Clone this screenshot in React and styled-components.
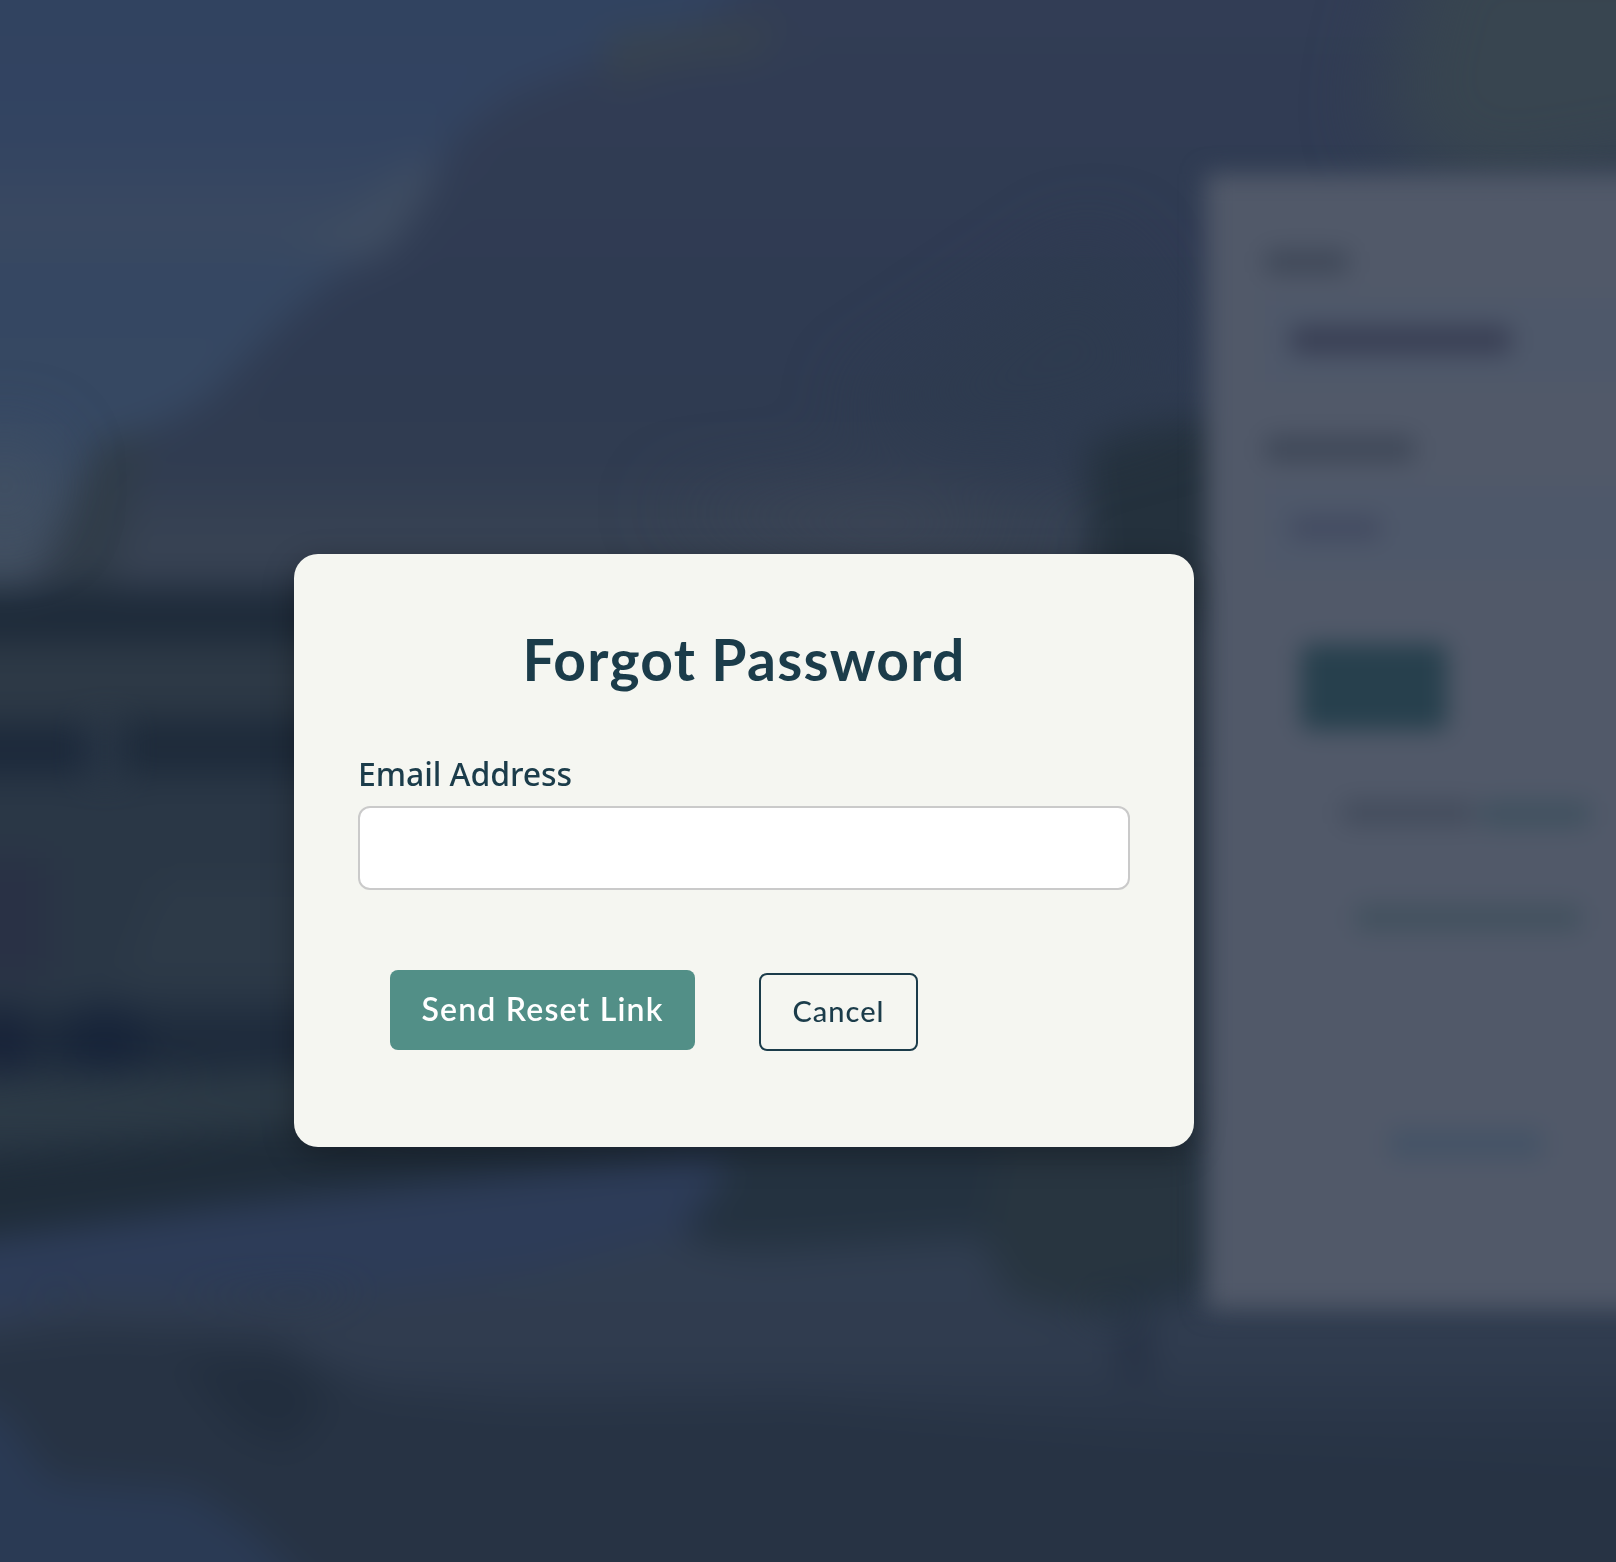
import React from "react";
import styled, { createGlobalStyle } from "styled-components";

const GlobalStyle = createGlobalStyle`
  *, *::before, *::after { box-sizing: border-box; }
  body { margin: 0; background: #29364a; }
`;

const Page = styled.main`
  position: relative;
  width: 100%;
  height: 1562px;
  overflow: hidden;
  background: #2b384a;
`;

const Landscape = styled.svg`
  position: absolute;
  inset: 0;
  width: 1616px;
  height: 1562px;
`;

const LoginLayer = styled.div`
  position: absolute;
  inset: 0;
  display: flex;
  justify-content: flex-end;
  align-items: flex-start;
  padding-top: 174px;
  filter: blur(12px);
`;

const LoginCard = styled.div`
  display: flex;
  flex-direction: column;
  flex-shrink: 0;
  width: 470px;
  height: 1136px;
  margin-right: -60px;
  padding: 76px 0 0 59px;
  background: #515969;
`;

const Smudge = styled.div`
  width: ${(p) => p.$width}px;
  height: ${(p) => p.$height}px;
  border-radius: 6px;
  background: ${(p) => p.$tone};
`;

const LoginField = styled.div`
  display: flex;
  align-items: center;
  height: 84px;
  margin: 24px 0 ${(p) => p.$after}px;
  padding-left: 26px;
  background: #4e586a;
`;

const LoginButton = styled.div`
  width: 146px;
  height: 86px;
  margin: -1px 0 -1px 36px;
  border-radius: 8px;
  background: #27404d;
`;

const LoginLine = styled.div`
  display: flex;
  gap: 6px;
  margin: ${(p) => p.$before}px 0 0 ${(p) => p.$indent}px;
`;

const Overlay = styled.div`
  position: absolute;
  inset: 0;
  display: flex;
  align-items: center;
  justify-content: center;
  padding: 139px 128px 0 0;
`;

const Dialog = styled.form`
  width: 900px;
  height: 593px;
  padding: 64px;
  border-radius: 24px;
  background: #f5f6f1;
  box-shadow: 0 8px 32px rgba(0, 0, 0, 0.3);
  color: #1b3c4a;
`;

const Title = styled.h2`
  margin: 7px 0 0;
  font: 700 57px/68px Lato, "Open Sans", sans-serif;
  letter-spacing: 1.25px;
  text-align: center;
  white-space: nowrap;
`;

const Label = styled.label`
  display: block;
  margin-top: 59px;
  font: 500 32px/44px "Noto Sans", "Open Sans", sans-serif;
  letter-spacing: -0.08px;
`;

const TextInput = styled.input`
  display: block;
  width: 100%;
  height: 84px;
  margin-top: 10px;
  padding: 0 24px;
  border: 2px solid #cacaca;
  border-radius: 12px;
  background: #fff;
  font: 32px "Noto Sans", sans-serif;
  outline: none;
`;

const Actions = styled.div`
  display: flex;
  align-items: flex-end;
  gap: 64px;
  margin-top: 80px;
  padding-left: 32px;
`;

const Button = styled.button`
  flex-shrink: 0;
  width: ${(p) => (p.$primary ? 305 : 159)}px;
  height: ${(p) => (p.$primary ? 80 : 78)}px;
  margin-bottom: ${(p) => (p.$primary ? 1 : 0)}px;
  padding: 0 0 3px;
  border: ${(p) => (p.$primary ? "none" : "2px solid #1b3c4a")};
  border-radius: 8px;
  background: ${(p) => (p.$primary ? "#528f87" : "transparent")};
  color: ${(p) => (p.$primary ? "#fff" : "#1b3c4a")};
  font: ${(p) => (p.$primary ? "600 32px" : "500 29px")} Lato, "Open Sans", sans-serif;
  letter-spacing: ${(p) => (p.$primary ? 1.2 : 1)}px;
  white-space: nowrap;
`;

function MountainScene() {
  return (
    <Landscape viewBox="0 0 1616 1562" aria-hidden="true">
      <defs>
        <filter id="soft" filterUnits="userSpaceOnUse" x="-150" y="-150" width="1916" height="1862" colorInterpolationFilters="sRGB">
          <feGaussianBlur stdDeviation="18" />
        </filter>
        <filter id="mist" filterUnits="userSpaceOnUse" x="-150" y="-150" width="1916" height="1862" colorInterpolationFilters="sRGB">
          <feGaussianBlur stdDeviation="38" />
        </filter>
        <linearGradient id="sky" x1="0" y1="0" x2="0" y2="1">
          <stop offset="0" stopColor="#304260" />
          <stop offset="0.35" stopColor="#334461" />
          <stop offset="0.47" stopColor="#3a4961" />
          <stop offset="0.55" stopColor="#354762" />
          <stop offset="0.8" stopColor="#374963" />
          <stop offset="1" stopColor="#435060" />
        </linearGradient>
        <linearGradient id="rock" gradientUnits="userSpaceOnUse" x1="0" y1="0" x2="0" y2="600">
          <stop offset="0" stopColor="#323d55" />
          <stop offset="0.55" stopColor="#2f3b52" />
          <stop offset="0.78" stopColor="#303c51" />
          <stop offset="0.88" stopColor="#374253" />
          <stop offset="1" stopColor="#384253" />
        </linearGradient>
        <linearGradient id="ground" gradientUnits="userSpaceOnUse" x1="0" y1="1200" x2="0" y2="1562">
          <stop offset="0" stopColor="#313e51" />
          <stop offset="0.42" stopColor="#303c4f" />
          <stop offset="0.62" stopColor="#293547" />
          <stop offset="1" stopColor="#253243" />
        </linearGradient>
      </defs>
      <rect x="0" y="0" width="1616" height="1562" fill="#2b3848" />
      <g filter="url(#soft)">
        <rect x="-100" y="-100" width="1000" height="690" fill="url(#sky)" />
        <path d="M340 225L430 150V205L390 260L290 245Z" fill="#3f4d62" />
        <path d="M850 -100L710 15L580 68L510 95L455 138L427 195L390 250L340 272L285 320L205 400L110 450L75 500L38 560L20 620H1750V-100Z" fill="url(#rock)" />
        <path d="M605 35L780 22L760 55L650 65L615 90Z" fill="#38434f" />
        <path d="M100 440L150 430L130 510L110 590H50L70 500Z" fill="#303c49" />
        <rect x="-80" y="588" width="1200" height="54" fill="#1d2a39" />
        <rect x="-80" y="642" width="1300" height="82" fill="#2d3946" />
        <rect x="-80" y="724" width="170" height="50" fill="#1b283a" />
        <rect x="120" y="718" width="400" height="56" fill="#1d2a3a" />
        <rect x="-80" y="774" width="700" height="240" fill="#2a3746" />
        <rect x="-80" y="858" width="130" height="120" fill="#293145" />
        <path d="M160 880H500V980H120Z" fill="#2d3a48" />
        <rect x="-80" y="1010" width="420" height="64" fill="#1e2b3c" />
        <ellipse cx="105" cy="1038" rx="42" ry="34" fill="#172439" />
        <ellipse cx="0" cy="1040" rx="30" ry="36" fill="#182339" />
        <path d="M-80 1088L420 1065V1120L-80 1145Z" fill="#2c3a46" />
        <path d="M-80 1160L300 1125H1200V1280H-80Z" fill="#1f2c39" />
        <path d="M-80 1248L220 1206L735 1150L725 1180L680 1240L560 1275L450 1290L60 1295L-80 1345Z" fill="#2d3c58" />
        <path d="M735 1130H1210V1310H1000L970 1250L760 1250L705 1225Z" fill="#243240" />
        <path d="M-80 1330L100 1290L300 1300L540 1270L680 1235L760 1250L980 1236L1010 1295L1110 1320L1200 1290L1700 1290V1660H-80Z" fill="url(#ground)" />
        <path d="M-80 1345L100 1325L270 1335L380 1390L520 1405L800 1400L1120 1435L1680 1470V1680H-80Z" fill="#273344" />
        <path d="M180 1360L290 1355L330 1400L290 1450L240 1430Z" fill="#222e3e" />
        <path d="M-80 1395L0 1410L50 1480L190 1490L250 1530L320 1600H-80Z" fill="#2a3a54" />
        <path d="M1000 1140H1195V1270L1110 1285L1100 1310L1015 1300L985 1230Z" fill="#283540" />
        <path d="M1085 440L1130 420H1250V620H1095Z" fill="#24313d" />
        <ellipse cx="1135" cy="1352" rx="12" ry="32" fill="#222d40" />
      </g>
      <g filter="url(#mist)">
        <path d="M1430 -80H1720V160L1470 200L1380 120Z" fill="#384550" />
        <ellipse cx="5" cy="485" rx="42" ry="45" fill="#4c5866" opacity="0.6" />
        <path d="M850 410L1100 240L1190 400L1000 450Z" fill="#2e3b4f" />
        <path d="M650 505L900 480L1040 530L880 570Z" fill="#3f4857" opacity="0.5" />
      </g>
    </Landscape>
  );
}

export default function App() {
  return (
    <>
      <GlobalStyle />
      <Page>
        <MountainScene />
        <LoginLayer aria-hidden="true">
          <LoginCard>
            <Smudge $width={84} $height={24} $tone="#3f4858" />
            <LoginField $after={54}>
              <Smudge $width={220} $height={28} $tone="#393f54" />
            </LoginField>
            <Smudge $width={150} $height={26} $tone="#3f4858" />
            <LoginField $after={75}>
              <Smudge $width={90} $height={22} $tone="#424a60" />
            </LoginField>
            <LoginButton />
            <LoginLine $before={72} $indent={77}>
              <Smudge $width={132} $height={24} $tone="#434c5c" />
              <Smudge $width={110} $height={26} $tone="#40515f" />
            </LoginLine>
            <LoginLine $before={78} $indent={90}>
              <Smudge $width={226} $height={26} $tone="#42515e" />
            </LoginLine>
            <LoginLine $before={199} $indent={124}>
              <Smudge $width={154} $height={28} $tone="#445366" />
            </LoginLine>
          </LoginCard>
        </LoginLayer>
        <Overlay>
          <Dialog role="dialog" aria-labelledby="dialog-title" onSubmit={(e) => e.preventDefault()}>
            <Title id="dialog-title">Forgot Password</Title>
            <Label htmlFor="email">Email Address</Label>
            <TextInput id="email" type="email" />
            <Actions>
              <Button type="submit" $primary>Send Reset Link</Button>
              <Button type="button">Cancel</Button>
            </Actions>
          </Dialog>
        </Overlay>
      </Page>
    </>
  );
}
